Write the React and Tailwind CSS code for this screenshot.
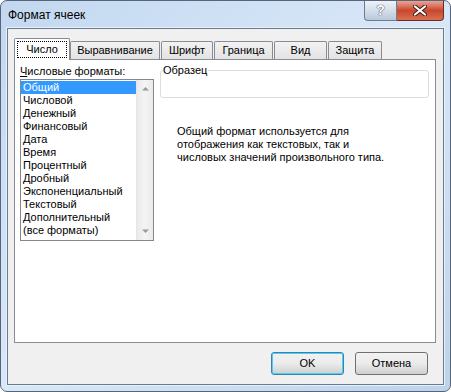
const formats = [
  'Общий',
  'Числовой',
  'Денежный',
  'Финансовый',
  'Дата',
  'Время',
  'Процентный',
  'Дробный',
  'Экспоненциальный',
  'Текстовый',
  'Дополнительный',
  '(все форматы)',
]

const tabs = [
  { label: 'Число', w: 'w-[56px]', active: true },
  { label: 'Выравнивание', w: 'w-[90px]' },
  { label: 'Шрифт', w: 'w-[52px]' },
  { label: 'Граница', w: 'w-[59px]' },
  { label: 'Вид', w: 'w-[53px]' },
  { label: 'Защита', w: 'w-[54px]' },
]

function Tab({ label, w, active }) {
  if (active) {
    return (
      <div
        className={`${w} relative z-10 -mb-[1px] flex h-[22px] items-center justify-center rounded-t-[2px] border border-b-0 border-[#898c95] bg-white`}
      >
        <span className="border border-dotted border-black px-[8px] py-[1px] leading-[13px]">{label}</span>
      </div>
    )
  }
  return (
    <div
      className={`${w} mr-[1px] flex h-[18px] items-center justify-center rounded-t-[2px] border border-b-0 border-[#898c95] bg-gradient-to-b from-[#f2f2f2] to-[#e3e3e3]`}
    >
      {label}
    </div>
  )
}

function Button({ children, focused }) {
  return (
    <div
      className={`flex h-[23px] w-[73px] items-center justify-center rounded-[3px] border ${
        focused ? 'border-[#3c7fb1] shadow-[inset_0_0_0_1px_#48d0f5]' : 'border-[#707070]'
      } bg-gradient-to-b from-[#f2f2f2] via-[#ebebeb] to-[#cfcfcf]`}
    >
      {children}
    </div>
  )
}

export default function App() {
  return (
    <div className="h-[392px] w-[451px] bg-white font-['Liberation_Sans',Arial,sans-serif] text-[11px] text-black">
      <div className="flex h-full w-full flex-col rounded-[7px] border border-[#56657a] bg-gradient-to-br from-[#c2d8f0] via-[#d9e8f8] to-[#bcd3ec]">
        {/* Title bar */}
        <div className="flex h-[27px] items-start justify-between">
          <div className="pl-[7px] pt-[7px] text-[12px] leading-[15px]">Формат ячеек</div>
          <div className="mr-[6px] flex">
            <div className="flex h-[20px] w-[33px] items-center justify-center rounded-bl-[4px] border border-t-0 border-[#6d7c8f] bg-gradient-to-b from-[#eef3f9] via-[#d4deea] to-[#b8c8da] text-[14px] font-bold text-white [text-shadow:0_0_1px_#253446,0_0_1px_#253446]">
              ?
            </div>
            <div className="flex h-[20px] w-[47px] items-center justify-center rounded-br-[4px] border border-l-0 border-t-0 border-[#6d2b22] bg-gradient-to-b from-[#e8a493] via-[#c9452f] to-[#d8704f]">
              <svg width="14" height="11" viewBox="0 0 14 11">
                <path d="M2 1.5 L12 9.5 M12 1.5 L2 9.5" stroke="#3b1d18" strokeWidth="4" strokeLinecap="round" />
                <path d="M2 1.5 L12 9.5 M12 1.5 L2 9.5" stroke="#ffffff" strokeWidth="2.2" strokeLinecap="round" />
              </svg>
            </div>
          </div>
        </div>

        {/* Client area */}
        <div className="mx-[6px] mb-[6px] flex flex-1 flex-col border border-[#6b7a8d] bg-[#f0f0f0] shadow-[0_0_0_1px_#e8f1fb]">
          {/* Tabs */}
          <div className="flex h-[30px] items-end pl-[6px] pt-[9px]">
            {tabs.map((t) => (
              <Tab key={t.label} {...t} />
            ))}
          </div>

          {/* Panel */}
          <div className="ml-[6px] flex h-[284px] w-[422px] border border-[#898c95] bg-white pl-[5px] pt-[5px]">
            {/* Left column */}
            <div className="flex flex-col">
              <div className="leading-[13px]">
                <span className="underline">Ч</span>исловые форматы:
              </div>
              <div className="mt-[1px] flex h-[162px] w-[134px] border border-[#828790]">
                <div className="flex-1 pt-[1px]">
                  {formats.map((f, i) => (
                    <div
                      key={f}
                      className={`h-[13px] pl-[2px] leading-[13px] ${i === 0 ? 'bg-[#3399ff] text-white' : ''}`}
                    >
                      {f}
                    </div>
                  ))}
                </div>
                <div className="flex w-[17px] flex-col justify-between border-l border-[#e6e6e6] bg-gradient-to-r from-[#eaeaea] via-[#f4f4f4] to-[#eaeaea] py-[6px]">
                  <svg width="17" height="5" viewBox="0 0 17 5">
                    <path d="M5 4.5 L8.5 1 L12 4.5 Z" fill="#9a9a9a" />
                  </svg>
                  <svg width="17" height="5" viewBox="0 0 17 5">
                    <path d="M5 0.5 L8.5 4 L12 0.5 Z" fill="#9a9a9a" />
                  </svg>
                </div>
              </div>
            </div>

            {/* Right column */}
            <div className="ml-[6px] flex flex-col">
              <div className="relative mt-[5px] h-[28px] w-[269px] rounded-[3px] border border-[#d5dfe5]">
                <span className="absolute -top-[7px] left-[2px] bg-white pr-[1px] leading-[13px]">Образец</span>
              </div>
              <div className="ml-[17px] mt-[27px] leading-[13px]">
                Общий формат используется для
                <br />
                отображения как текстовых, так и
                <br />
                числовых значений произвольного типа.
              </div>
            </div>
          </div>

          {/* Buttons */}
          <div className="mt-[9px] flex justify-end gap-[11px] pr-[15px]">
            <Button focused>OK</Button>
            <Button>Отмена</Button>
          </div>
        </div>
      </div>
    </div>
  )
}
